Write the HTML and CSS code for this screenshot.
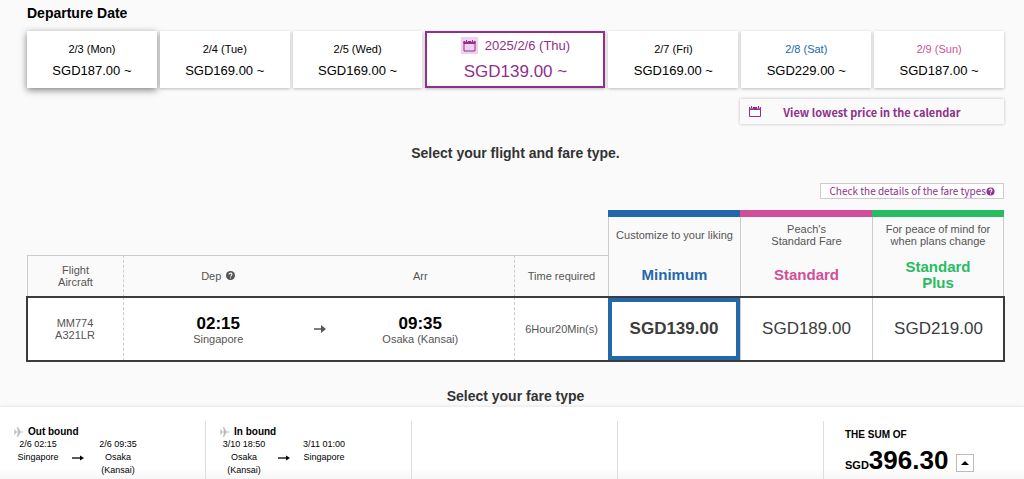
FILE: index.html
```html
<!DOCTYPE html>
<html lang="en">
<head>
  <meta charset="UTF-8">
  <meta name="viewport" content="width=device-width, initial-scale=1">
  <title>Select your flight</title>
  <link rel="stylesheet" href="styles.css">
</head>
<body>
  <main class="content">
    <h2 class="date-title">Departure Date</h2>
    <div class="dates">
      <button class="date raised" type="button"><span class="day">2/3 (Mon)</span><span class="fare">SGD187.00 ~</span></button>
      <button class="date" type="button"><span class="day">2/4 (Tue)</span><span class="fare">SGD169.00 ~</span></button>
      <button class="date" type="button"><span class="day">2/5 (Wed)</span><span class="fare">SGD169.00 ~</span></button>
      <button class="date selected" type="button">
        <span class="day">
          <svg class="cal cal-tinted" viewBox="0 0 17 17" aria-hidden="true">
            <path d="M3 4.500h11v9.500H3z" fill="none" stroke="currentColor"/>
            <path d="M2.500 4h12v3h-12z" fill="currentColor"/>
            <path d="M5.500 3v2M11.500 3v2" stroke="#f0d0ee" stroke-width="2.500"/>
            <path d="M5.500 3v2M11.500 3v2" stroke="currentColor"/>
          </svg>
          2025/2/6 (Thu)
        </span>
        <span class="fare">SGD139.00 ~</span>
      </button>
      <button class="date" type="button"><span class="day">2/7 (Fri)</span><span class="fare">SGD169.00 ~</span></button>
      <button class="date" type="button"><span class="day sat">2/8 (Sat)</span><span class="fare">SGD229.00 ~</span></button>
      <button class="date" type="button"><span class="day sun">2/9 (Sun)</span><span class="fare">SGD187.00 ~</span></button>
    </div>

    <button class="lowest" type="button">
      <svg class="cal" viewBox="0 0 14 14" aria-hidden="true">
        <path d="M1.500 2.500h11v9h-11z" fill="none" stroke="currentColor"/>
        <path d="M1 2h12v3H1z" fill="currentColor"/>
        <path d="M3.500 1v2.500M10.500 1v2.500" stroke="#fafafa" stroke-width="2.500"/>
        <path d="M3.500 1v2.500M10.500 1v2.500" stroke="currentColor"/>
      </svg>
      <span>View lowest price in the calendar</span>
    </button>

    <h2 class="heading">Select your flight and fare type.</h2>

    <a class="details" href="#">Check the details of the fare types<svg class="help" viewBox="0 0 10 10" aria-hidden="true"><circle cx="5" cy="5" r="4.500" fill="currentColor"/><path d="M3.400 4a1.600 1.500 0 1 1 2.400 1.200Q5 5.500 5 6.200" fill="none" stroke="#fff" stroke-width="1.200"/><circle cx="5" cy="7.600" r=".7" fill="#fff"/></svg></a>

    <table class="flights">
      <colgroup>
        <col class="col-flight">
        <col>
        <col class="col-arrow">
        <col>
        <col class="col-time">
        <col class="col-fare" span="3">
      </colgroup>
      <thead>
        <tr class="row-top">
          <td colspan="5"></td>
          <th class="plan minimum" rowspan="2"><div class="plan-note">Customize to your liking</div><div class="plan-name">Minimum</div></th>
          <th class="plan standard" rowspan="2"><div class="plan-note">Peach's<br>Standard Fare</div><div class="plan-name">Standard</div></th>
          <th class="plan plus" rowspan="2"><div class="plan-note">For peace of mind for<br>when plans change</div><div class="plan-name">Standard<br>Plus</div></th>
        </tr>
        <tr class="row-head">
          <th class="first dashed">Flight<br>Aircraft</th>
          <th><span class="dep">Dep <svg class="help" viewBox="0 0 10 10" aria-hidden="true"><circle cx="5" cy="5" r="5" fill="currentColor"/><path d="M3.400 4a1.600 1.500 0 1 1 2.400 1.200Q5 5.500 5 6.200" fill="none" stroke="#fff" stroke-width="1.200"/><circle cx="5" cy="7.600" r=".7" fill="#fff"/></svg></span></th>
          <th></th>
          <th class="dashed">Arr</th>
          <th>Time required</th>
        </tr>
      </thead>
      <tbody>
        <tr class="flight">
          <td class="dashed">MM774<br>A321LR</td>
          <td><div class="time">02:15</div>Singapore</td>
          <td>
            <svg class="arrow" viewBox="0 0 12 10" aria-hidden="true"><path d="M0 5h8" stroke="currentColor" stroke-width="1.500"/><path d="M7 1l5 4-5 4z" fill="currentColor"/></svg>
          </td>
          <td class="dashed"><div class="time">09:35</div>Osaka (Kansai)</td>
          <td>6Hour20Min(s)</td>
          <td class="price"><button class="chosen" type="button">SGD139.00</button></td>
          <td class="price"><button type="button">SGD189.00</button></td>
          <td class="price"><button type="button">SGD219.00</button></td>
        </tr>
      </tbody>
    </table>

    <h2 class="heading">Select your fare type</h2>
  </main>

  <footer class="summary">
    <section class="leg">
      <h3><svg class="plane" viewBox="0 0 10 10" aria-hidden="true"><path d="M0 2.500h1l1.200 2H4L3 0h1l2.500 4.500H9q1 .5 0 1H6.500L4 10H3l1-4.500H2.200L1 7.500H0l.6-2.500z" fill="currentColor"/></svg>Out bound</h3>
      <div class="route">
        <div>2/6 02:15<br>Singapore</div>
        <svg class="leg-arrow" viewBox="0 0 12 6" aria-hidden="true"><path d="M0 3h9" stroke="currentColor" stroke-width="1.300"/><path d="M8 .5l4 2.500-4 2.500z" fill="currentColor"/></svg>
        <div>2/6 09:35<br>Osaka<br>(Kansai)</div>
      </div>
    </section>
    <section class="leg">
      <h3><svg class="plane" viewBox="0 0 10 10" aria-hidden="true"><path d="M0 2.500h1l1.200 2H4L3 0h1l2.500 4.500H9q1 .5 0 1H6.500L4 10H3l1-4.500H2.200L1 7.500H0l.6-2.500z" fill="currentColor"/></svg>In bound</h3>
      <div class="route">
        <div>3/10 18:50<br>Osaka<br>(Kansai)</div>
        <svg class="leg-arrow" viewBox="0 0 12 6" aria-hidden="true"><path d="M0 3h9" stroke="currentColor" stroke-width="1.300"/><path d="M8 .5l4 2.500-4 2.500z" fill="currentColor"/></svg>
        <div>3/11 01:00<br>Singapore</div>
      </div>
    </section>
    <section class="leg"></section>
    <section class="leg"></section>
    <section class="total">
      <h3>THE SUM OF</h3>
      <div class="sum">
        <span class="amount"><small>SGD</small>396.30</span>
        <button class="toggle" type="button" aria-label="Show details">
          <svg viewBox="0 0 8 4" aria-hidden="true"><path d="M0 4l4-4 4 4z" fill="currentColor"/></svg>
        </button>
      </div>
    </section>
  </footer>
</body>
</html>
```
FILE: styles.css
```css
* {
  box-sizing: border-box;
}
body {
  margin: 0;
  min-height: 100vh;
  display: flex;
  flex-direction: column;
  background: #fafafa;
  color: #000;
  font-family: "Liberation Sans", Arial, sans-serif;
  font-size: 11px;
}
h2, h3 {
  margin: 0;
}
button {
  font-family: inherit;
  color: inherit;
  cursor: pointer;
}
svg {
  flex: none;
}
.content {
  display: flex;
  flex-direction: column;
  padding: 4px 20px 0 27px;
}
.date-title {
  font-size: 14px;
  line-height: 18px;
}

/* date picker */
.dates {
  display: grid;
  grid-template-columns: repeat(3, 1fr) 180px repeat(3, 1fr);
  gap: 3px;
  margin-top: 9px;
}
.date {
  display: flex;
  flex-direction: column;
  align-items: center;
  justify-content: center;
  gap: 4px;
  min-height: 57px;
  padding: 0;
  border: 0;
  background: #fff;
  box-shadow: 0 1px 3px rgba(0, 0, 0, 0.25);
}
.date.raised {
  box-shadow: 0 2px 7px rgba(0, 0, 0, 0.5);
}
.day {
  display: flex;
  align-items: center;
  gap: 7px;
  font-size: 11px;
  line-height: 17px;
}
.fare {
  font-size: 13px;
  line-height: 17px;
}
.sat {
  color: #2068b0;
}
.sun {
  color: #d05098;
}
.selected {
  gap: 8px;
  border: 2px solid #90308a;
  color: #90308a;
}
.selected .day {
  font-size: 13px;
}
.selected .fare {
  font-size: 17px;
  line-height: 20px;
}
.cal {
  width: 14px;
  height: 14px;
}
.cal-tinted {
  width: 17px;
  height: 17px;
  background: #f0d0ee;
}
.lowest {
  display: flex;
  align-items: center;
  align-self: flex-end;
  width: 264px;
  min-height: 25px;
  margin-top: 11px;
  padding: 0 8px;
  border: 0;
  background: #fafafa;
  box-shadow: 0 0 3px rgba(0, 0, 0, 0.25);
  color: #90308a;
  font-family: "Noto Sans CJK JP", sans-serif;
  font-size: 11px;
  font-weight: bold;
  line-height: 18px;
}
.lowest span {
  flex: 1;
  padding-right: 14px;
}

.heading {
  margin-top: 20px;
  color: #333;
  font-size: 14px;
  line-height: 18px;
  text-align: center;
}
.details {
  display: flex;
  align-items: center;
  align-self: flex-end;
  margin-top: 21px;
  padding: 0 8px;
  border: 1px solid #ccc;
  background: #fff;
  color: #90308a;
  font-family: "Noto Sans CJK JP", sans-serif;
  font-size: 10px;
  line-height: 14px;
  text-decoration: none;
}
.help {
  width: 9px;
  height: 9px;
}

/* flight table */
.flights {
  width: 100%;
  margin-top: 11px;
  border-spacing: 0;
  table-layout: fixed;
  color: #555;
  line-height: 12px;
  text-align: center;
}
.col-flight {
  width: 97px;
}
.col-arrow {
  width: 14px;
}
.col-time {
  width: 93px;
}
.col-fare {
  width: 132px;
}
.flights th,
.flights td {
  padding: 0;
  font-weight: normal;
}
.row-top {
  height: 45px;
}
.row-head {
  height: 42px;
}
.flights .row-head th {
  padding-bottom: 2px;
  border-top: 1px solid #ccc;
}
.row-head .first {
  border-left: 1px solid #ccc;
}
.flights .dashed {
  border-right: 1px dashed #ccc;
}
.dep {
  display: inline-flex;
  align-items: center;
  gap: 5px;
}
.plan {
  border-top: 7px solid;
  vertical-align: top;
}
.plan-note,
.plan-name {
  display: flex;
  align-items: center;
  justify-content: center;
  border-left: 1px solid #ccc;
}
.plus .plan-note,
.plus .plan-name {
  border-right: 1px solid #ccc;
}
.plan-note {
  height: 35px;
}
.plan-name {
  height: 45px;
  font-size: 15px;
  font-weight: bold;
  line-height: 16px;
}
.minimum {
  border-top-color: #2468ac;
}
.minimum .plan-name {
  color: #2468ac;
}
.standard {
  border-top-color: #d04f98;
}
.standard .plan-name {
  color: #d04f98;
}
.plus {
  border-top-color: #28bc62;
}
.plus .plan-name {
  color: #28bc62;
}
.flight {
  height: 64px;
  background: #fff;
  outline: 2px solid #3c3c3c;
  outline-offset: -1px;
}
.time {
  color: #000;
  font-size: 17px;
  font-weight: bold;
  line-height: 19px;
}
.arrow {
  display: block;
  width: 12px;
  height: 10px;
  margin: auto;
}
.price + .price {
  border-left: 1px solid #ccc;
}
.price button {
  display: block;
  width: 100%;
  min-height: 62px;
  padding: 0;
  border: 0;
  background: none;
  color: #3c3c3c;
  font-size: 17px;
}
.price .chosen {
  border: 4px solid #2468ac;
  font-weight: bold;
}
.flights + .heading {
  margin-top: 26px;
}

/* summary bar */
.summary {
  position: sticky;
  bottom: 0;
  display: grid;
  grid-template-columns: repeat(4, 103fr) 100fr;
  margin-top: auto;
  padding-top: 14px;
  background: linear-gradient(#fff 85%, #f6f6f6);
  box-shadow: 0 0 4px rgba(0, 0, 0, 0.12);
}
.leg {
  padding: 4px 14px 0;
  border-right: 1px solid #ddd;
}
.summary h3 {
  display: flex;
  align-items: center;
  gap: 4px;
  font-size: 10px;
  line-height: 13px;
}
.plane {
  width: 10px;
  height: 10px;
  color: #bbb;
}
.route {
  display: grid;
  grid-template-columns: 48px 12px 48px;
  column-gap: 10px;
  font-size: 9px;
  line-height: 13px;
  text-align: center;
}
.leg-arrow {
  width: 12px;
  height: 6px;
  margin-top: 17px;
}
.total {
  padding: 7px 21px 0;
}
.sum {
  display: flex;
  align-items: center;
  gap: 8px;
  margin-top: 5px;
}
.amount {
  font-size: 26px;
  font-weight: bold;
  line-height: 28px;
}
.amount small {
  font-size: 11px;
}
.toggle {
  display: flex;
  align-items: center;
  justify-content: center;
  width: 18px;
  height: 18px;
  padding: 0;
  border: 1px solid #bbb;
  background: #fff;
}
.toggle svg {
  width: 8px;
  height: 4px;
}
```
